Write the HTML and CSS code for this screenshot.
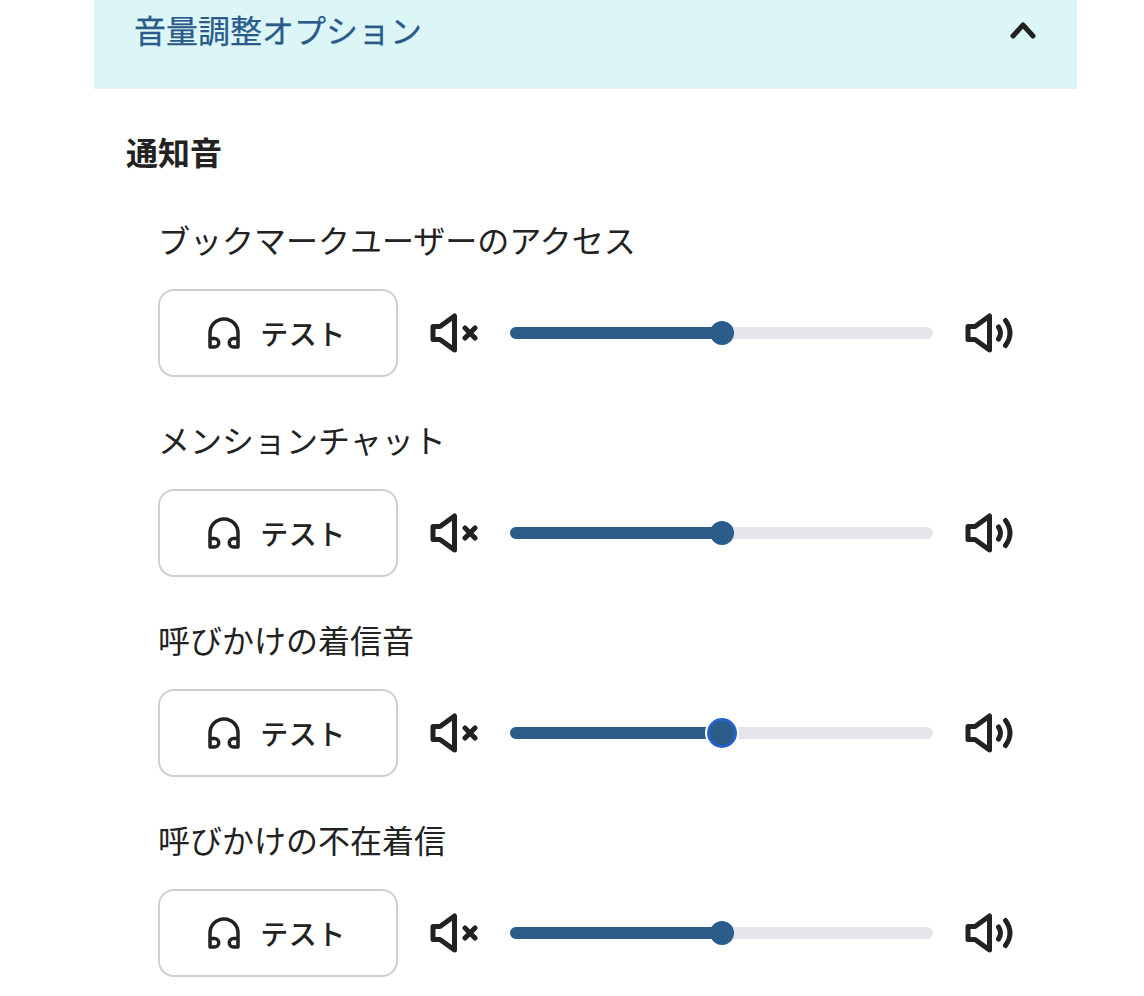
FILE: index.html
```html
<!DOCTYPE html>
<html lang="ja">
<head>
<meta charset="utf-8">
<title>音量調整オプション</title>
<link rel="stylesheet" href="styles.css">
</head>
<body>
<svg class="sprite" aria-hidden="true">
  <symbol id="i-headphones" viewBox="0 0 32 32"><path d="M2 30V16a14 14 0 0 1 28 0v14M2 21.500h4.500a4.250 4.250 0 0 1 0 8.500H2M30 21.500h-4.500a4.250 4.250 0 0 0 0 8.500H30"/></symbol>
  <symbol id="i-mute" viewBox="0 0 48 48"><path d="M3 17.500h7L24.500 7v34L10 30.500H3zM35 19l10 10M45 19L35 29"/></symbol>
  <symbol id="i-loud" viewBox="0 0 48 48"><path d="M3 17.500h7L24.500 7v34L10 30.500H3zM33.500 18q4 6 0 12M40.500 11.500q9 12.500 0 25"/></symbol>
</svg>
<main class="panel">
  <header class="panel-head">
    <h2 class="panel-title">音量調整オプション</h2>
    <svg class="chevron" viewBox="0 0 48 48" aria-hidden="true"><path d="M14 29l10-11 10 11"/></svg>
  </header>
  <section class="section">
    <h3 class="section-title">通知音</h3>
    <div class="sound">
      <div class="sound-label">ブックマークユーザーのアクセス</div>
      <div class="controls">
        <button class="test-btn"><svg class="ic-head"><use href="#i-headphones"/></svg><span>テスト</span></button>
        <svg class="ic-vol"><use href="#i-mute"/></svg>
        <div class="slider"><div class="slider-fill" style="width:50%"><span class="thumb"></span></div></div>
        <svg class="ic-vol"><use href="#i-loud"/></svg>
      </div>
    </div>
    <div class="sound">
      <div class="sound-label">メンションチャット</div>
      <div class="controls">
        <button class="test-btn"><svg class="ic-head"><use href="#i-headphones"/></svg><span>テスト</span></button>
        <svg class="ic-vol"><use href="#i-mute"/></svg>
        <div class="slider"><div class="slider-fill" style="width:50%"><span class="thumb"></span></div></div>
        <svg class="ic-vol"><use href="#i-loud"/></svg>
      </div>
    </div>
    <div class="sound">
      <div class="sound-label">呼びかけの着信音</div>
      <div class="controls">
        <button class="test-btn"><svg class="ic-head"><use href="#i-headphones"/></svg><span>テスト</span></button>
        <svg class="ic-vol"><use href="#i-mute"/></svg>
        <div class="slider"><div class="slider-fill" style="width:50%"><span class="thumb thumb-focus"></span></div></div>
        <svg class="ic-vol"><use href="#i-loud"/></svg>
      </div>
    </div>
    <div class="sound">
      <div class="sound-label">呼びかけの不在着信</div>
      <div class="controls">
        <button class="test-btn"><svg class="ic-head"><use href="#i-headphones"/></svg><span>テスト</span></button>
        <svg class="ic-vol"><use href="#i-mute"/></svg>
        <div class="slider"><div class="slider-fill" style="width:50%"><span class="thumb"></span></div></div>
        <svg class="ic-vol"><use href="#i-loud"/></svg>
      </div>
    </div>
  </section>
</main>
</body>
</html>
```
FILE: styles.css
```css
* { box-sizing: border-box; }
html, body { margin: 0; background: #fff; }
body {
  font-family: "Noto Sans CJK JP", "Noto Sans", sans-serif;
  color: #222;
  overflow: hidden;
  height: 996px;
}
.sprite { display: none; }
.panel { width: 983px; margin-left: 94px; }
.panel-head {
  height: 89px;
  padding: 7px 30px 0 40px;
  display: flex;
  justify-content: space-between;
  align-items: flex-start;
  background: #dcf6f7;
  border-bottom: 1px solid #eeeeee;
}
.panel-title {
  margin: 0;
  font-size: 32px;
  line-height: 44px;
  padding-bottom: 4px;
  font-weight: 400;
  color: #2a5a8a;
  -webkit-text-stroke: 0.25px #2a5a8a;
}
.chevron { width: 48px; height: 48px; fill: none; stroke: #222; stroke-width: 5; stroke-linecap: round; stroke-linejoin: round; }
.section { padding: 40px 0 0 32px; }
.section-title {
  margin: 0 0 40px;
  font-size: 32px;
  line-height: 44px;
  padding-bottom: 4px;
  font-weight: 700;
}
.sound { padding-left: 32px; margin-bottom: 40px; }
.sound-label { font-size: 32px; line-height: 44px; padding-bottom: 4px; margin-bottom: 24px; }
.controls { display: flex; align-items: center; gap: 32px; width: 855px; }
.test-btn {
  flex: none;
  width: 240px;
  height: 88px;
  display: flex;
  align-items: center;
  justify-content: center;
  gap: 20px;
  background: #fff;
  border: 2px solid #cfcfcf;
  border-radius: 16px;
  padding: 0 2px 0 0;
  font: inherit;
  font-size: 28px;
  font-weight: 500;
  letter-spacing: 0.5px;
  color: #222;
}
.ic-head, .ic-vol { fill: none; stroke: #222; stroke-linecap: round; stroke-linejoin: round; flex: none; }
.ic-head { width: 32px; height: 32px; stroke-width: 3.5; }
.ic-vol { width: 48px; height: 48px; stroke-width: 5; }
.slider { flex: 1; height: 12px; background: #e5e4ea; border-radius: 6px; }
.slider-fill { position: relative; height: 100%; background: #2b5c8a; border-radius: 6px 0 0 6px; }
.thumb {
  position: absolute;
  right: -12px;
  top: -6px;
  width: 24px;
  height: 24px;
  border-radius: 50%;
  background: #2b5c8a;
}
.thumb-focus {
  right: -15px;
  top: -9px;
  width: 30px;
  height: 30px;
  border: 3px solid #2563c9;
  box-shadow: 0 0 0 2px #fff;
}
```
